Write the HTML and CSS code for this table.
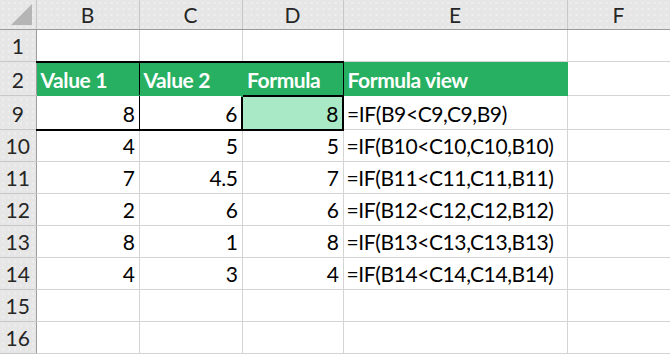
FILE: index.html
```html
<!DOCTYPE html>
<html lang="en">
<head>
  <meta charset="UTF-8">
  <title>IF formula - max of two values</title>
  <link rel="stylesheet" href="styles.css">
</head>
<body>
  <table class="sheet">
    <colgroup>
      <col class="col-rowhead">
      <col class="col-b">
      <col class="col-c">
      <col class="col-d">
      <col class="col-e">
      <col class="col-f">
    </colgroup>
    <thead>
      <tr class="colhead">
        <th class="corner">
          <svg class="select-all" width="22" height="22" viewBox="0 0 22 22">
            <polygon points="21,0 21,21 0,21" fill="#b5b5b5"/>
          </svg>
        </th>
        <th>B</th>
        <th>C</th>
        <th>D</th>
        <th>E</th>
        <th>F</th>
      </tr>
    </thead>
    <tbody>
      <tr class="row-1">
        <th>1</th>
        <td></td><td></td><td></td><td></td><td></td>
      </tr>
      <tr class="row-title">
        <th>2</th>
        <td class="title">Value 1</td>
        <td class="title">Value 2</td>
        <td class="title boxed">Formula</td>
        <td class="title">Formula view</td>
        <td></td>
      </tr>
      <tr class="row-first">
        <th>9</th>
        <td class="num">8</td>
        <td class="num">6</td>
        <td class="num boxed active">8</td>
        <td class="formula">=IF(B9&lt;C9,C9,B9)</td>
        <td></td>
      </tr>
      <tr>
        <th>10</th>
        <td class="num">4</td>
        <td class="num">5</td>
        <td class="num">5</td>
        <td class="formula">=IF(B10&lt;C10,C10,B10)</td>
        <td></td>
      </tr>
      <tr>
        <th>11</th>
        <td class="num">7</td>
        <td class="num">4.5</td>
        <td class="num">7</td>
        <td class="formula">=IF(B11&lt;C11,C11,B11)</td>
        <td></td>
      </tr>
      <tr>
        <th>12</th>
        <td class="num">2</td>
        <td class="num">6</td>
        <td class="num">6</td>
        <td class="formula">=IF(B12&lt;C12,C12,B12)</td>
        <td></td>
      </tr>
      <tr>
        <th>13</th>
        <td class="num">8</td>
        <td class="num">1</td>
        <td class="num">8</td>
        <td class="formula">=IF(B13&lt;C13,C13,B13)</td>
        <td></td>
      </tr>
      <tr>
        <th>14</th>
        <td class="num">4</td>
        <td class="num">3</td>
        <td class="num">4</td>
        <td class="formula">=IF(B14&lt;C14,C14,B14)</td>
        <td></td>
      </tr>
      <tr>
        <th>15</th>
        <td></td><td></td><td></td><td></td><td></td>
      </tr>
      <tr>
        <th>16</th>
        <td></td><td></td><td></td><td></td><td></td>
      </tr>
    </tbody>
  </table>
</body>
</html>
```

FILE: styles.css
```css
body {
  margin: 0;
  background-color: #ffffff;
  font-family: Lato, "Open Sans", sans-serif;
  color: #000000;
  overflow: hidden;
}

.sheet {
  border-collapse: collapse;
  table-layout: fixed;
  width: 670px;
  font-size: 21px;
  letter-spacing: -0.4px;
}

.col-rowhead { width: 36px; }
.col-b { width: 103px; }
.col-c { width: 103px; }
.col-d { width: 101px; }
.col-e { width: 224px; }
.col-f { width: 103px; }

/* grid lines */
td {
  border: 1px solid #d4d4d4;
  padding: 0 4px;
  height: 32px;
  line-height: 1;
  vertical-align: bottom;
  padding-bottom: 5px;
  box-sizing: border-box;
  white-space: nowrap;
  overflow: hidden;
}

/* headers */
th {
  font-weight: normal;
  color: #262626;
  background-color: #e6e6e6;
  background-image: radial-gradient(circle, #f3f3f3 0.6px, transparent 0.9px);
  background-size: 6px 6px;
  padding: 0;
  line-height: 1;
  letter-spacing: 0;
}

.colhead th {
  height: 29px;
  border-right: 1px solid #c8c8c8;
  border-bottom: 1px solid #9c9c9c;
  vertical-align: middle;
}

tbody th {
  border-right: 1px solid #9c9c9c;
  border-bottom: 1px solid #c8c8c8;
  text-align: center;
  vertical-align: bottom;
  padding-bottom: 5px;
}

.corner {
  position: relative;
}

.select-all {
  position: absolute;
  right: 3px;
  bottom: 3px;
}

.row-1 td { height: 32px; }
.row-title td { height: 34px; }
.row-first td { height: 34px; }

/* table block outline */
.row-title td.title {
  background-color: #28b062;
  color: #ffffff;
  font-weight: bold;
  border-color: #28b062;
}

.row-title td:nth-of-type(1),
.row-title td:nth-of-type(2),
.row-title td:nth-of-type(3) {
  border-top: 2px solid #000000;
  border-right: 1px solid #000000;
}

.row-first td:nth-of-type(1),
.row-first td:nth-of-type(2) {
  border-right: 1px solid #000000;
  border-bottom: 2px solid #000000;
}

td.boxed {
  border: 2px solid #000000;
}

.row-title td.boxed {
  border-bottom: 1px solid #000000;
}

td.active {
  background-color: #a9e9c6;
}

.num {
  text-align: right;
}

.formula {
  padding-left: 3px;
}
```
